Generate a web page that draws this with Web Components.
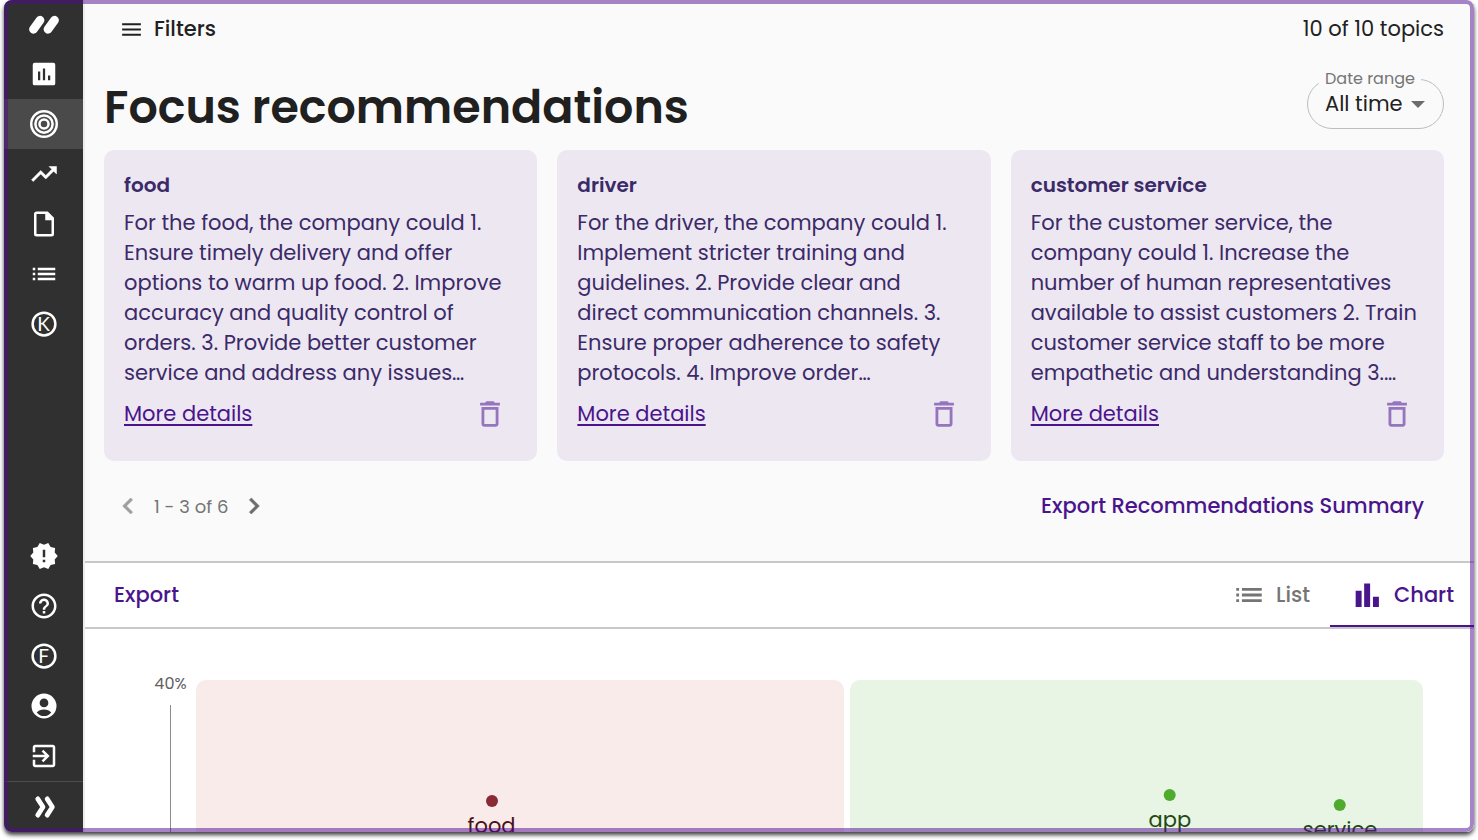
<!DOCTYPE html>
<html lang="en">
<head>
<meta charset="utf-8">
<meta name="viewport" content="width=device-width, initial-scale=1">
<title>Focus recommendations</title>
<style>
  body { margin: 0; background: #fff; font-family: Poppins, Inter, sans-serif; color: #212121; --brand: #4a148c; --muted: #757575; }
</style>
</head>
<body>
<focus-app></focus-app>
<script>
const ICONS = {
  logo: '<path d="M3.600 15.400L8.800 8.200M15.200 15.400L20.400 8.200" fill="none" stroke="currentColor" stroke-width="7" stroke-linecap="round"/>',
  report: '<path fill-rule="evenodd" d="M4.500 3h15A1.500 1.500 0 0 1 21 4.500v15a1.500 1.500 0 0 1-1.500 1.500h-15A1.500 1.500 0 0 1 3 19.500v-15A1.500 1.500 0 0 1 4.500 3zM7.200 10v7H9v-7zM11.100 7.500V17h1.800V7.500zM15.200 13.200V17H17v-3.800z"/>',
  target: '<g fill="none" stroke="currentColor" stroke-width="2"><circle cx="12" cy="12" r="10.200"/><circle cx="12" cy="12" r="6.900"/><circle cx="12" cy="12" r="3.600"/></g>',
  trend: '<path d="M16 6l2.290 2.290-4.880 4.880-4-4L2 16.590 3.410 18l6-6 4 4 6.300-6.290L22 12V6z" stroke="currentColor" stroke-width=".4"/>',
  file: '<path fill-rule="evenodd" d="M6 2h9l5 5v13a2 2 0 0 1-2 2H6a2 2 0 0 1-2-2V4c0-1.100.9-2 2-2zm0 2v16h12V9h-5V4z"/>',
  list: '<path d="M3 7h2v2H3zm4 0h14v2H7zM3 11h2v2H3zm4 0h14v2H7zM3 15h2v2H3zm4 0h14v2H7z"/>',
  ring: '<circle cx="12" cy="12" r="9.100" fill="none" stroke="currentColor" stroke-width="2"/>',
  alert: '<path fill-rule="evenodd" d="M23 12l-2.440-2.780.34-3.680-3.610-.82-1.890-3.180L12 3 8.600 1.540 6.710 4.720l-3.610.81.34 3.680L1 12l2.440 2.780-.34 3.690 3.610.82 1.890 3.180L12 21l3.400 1.460 1.890-3.180 3.610-.82-.34-3.680zM11 15h2v2h-2zm0-8h2v6h-2z"/>',
  help: '<path d="M11 18h2v-2h-2v2zm1-16C6.480 2 2 6.480 2 12s4.480 10 10 10 10-4.480 10-10S17.520 2 12 2zm0 18c-4.410 0-8-3.590-8-8s3.590-8 8-8 8 3.590 8 8-3.590 8-8 8zm0-14c-2.210 0-4 1.790-4 4h2c0-1.100.9-2 2-2s2 .9 2 2c0 2-3 1.750-3 5h2c0-2.250 3-2.500 3-5 0-2.210-1.790-4-4-4z"/>',
  user: '<path fill-rule="evenodd" d="M12 2a10 10 0 1 0 0 20 10 10 0 0 0 0-20zm0 4a3.500 3.500 0 1 1 0 7 3.500 3.500 0 0 1 0-7zM6.200 17.100C7.500 15.600 9.500 14.800 12 14.800s4.500.8 5.800 2.300C16.300 18.900 14.300 20 12 20s-4.300-1.100-5.800-2.900z"/>',
  exit: '<path d="M10.090 15.590L11.500 17l5-5-5-5-1.410 1.410L12.670 11H3v2h9.670l-2.580 2.590zM19 3H5c-1.110 0-2 .9-2 2v4h2V5h14v14H5v-4H3v4c0 1.100.89 2 2 2h14c1.100 0 2-.9 2-2V5c0-1.100-.9-2-2-2z"/>',
  expand: '<path d="M7 5.500l4.200 6.500L7 18.500M14.500 5.500l4.200 6.500-4.200 6.500" fill="none" stroke="currentColor" stroke-width="3.800" stroke-linecap="round" stroke-linejoin="round"/>',
  menu: '<path d="M3 6h18v1.900H3zm0 5.050h18v1.900H3zM3 16.100h18V18H3z"/>',
  trash: '<path fill-rule="evenodd" d="M6 19c0 1.100.9 2 2 2h8c1.100 0 2-.9 2-2V7H6v12zM8 9h8v10H8V9zm7.500-5l-1-1h-5l-1 1H5v2h14V4z"/>',
  prev: '<path d="M15.410 7.410L14 6l-6 6 6 6 1.410-1.410L10.830 12z" stroke="currentColor" stroke-width=".5"/>',
  next: '<path d="M10 6L8.590 7.410 13.170 12l-4.580 4.590L10 18l6-6z" stroke="currentColor" stroke-width=".5"/>',
  caret: '<path d="M5 9h14l-7 7z"/>',
  bars: '<path d="M4 9h4.200v11.500H4zM10 3.800h4.200v16.700H10zM16.200 13.200h4.200v7.300h-4.200z"/>'
};

class UiIcon extends HTMLElement {
  constructor() { super(); this.attachShadow({ mode: 'open' }); }
  connectedCallback() {
    this.shadowRoot.innerHTML = `<style>
      :host { display: inline-grid; place-items: center; width: var(--size, 30px); height: var(--size, 30px); flex: none; }
      svg, slot { grid-area: 1 / 1; }
      svg { width: 100%; height: 100%; fill: currentColor; display: block; }
    </style><svg viewBox="0 0 24 24" aria-hidden="true">${ICONS[this.getAttribute('name')]}</svg><slot></slot>`;
  }
}

class NavItem extends HTMLElement {
  constructor() { super(); this.attachShadow({ mode: 'open' }); }
  connectedCallback() {
    const letter = this.getAttribute('letter');
    this.shadowRoot.innerHTML = `<style>
      :host { display: block; height: 50px; }
      :host([active]) { background: #4a4a4a; }
      a { display: flex; height: 100%; align-items: center; justify-content: center; color: #fff; text-decoration: none; }
      span { font: 19px/20px Lato, sans-serif; grid-area: 1 / 1; }
    </style><a href="#" aria-label="${this.getAttribute('label')}"><ui-icon name="${this.getAttribute('icon')}">${letter ? `<span>${letter}</span>` : ''}</ui-icon></a>`;
  }
}

class SideNav extends HTMLElement {
  constructor() {
    super();
    this.attachShadow({ mode: 'open' }).innerHTML = `<style>
      :host { display: block; background: #303030; border-right: 2px solid #ececec; }
      nav { display: flex; flex-direction: column; height: 100%; }
      .logo { height: 49px; }
      .space { flex: 1; }
      .toggle { border-top: 1px solid #4c4c4c; }
    </style>
    <nav aria-label="Main">
      <nav-item class="logo" icon="logo" label="Home"></nav-item>
      <nav-item icon="report" label="Reports"></nav-item>
      <nav-item icon="target" label="Focus" active></nav-item>
      <nav-item icon="trend" label="Trends"></nav-item>
      <nav-item icon="file" label="Documents"></nav-item>
      <nav-item icon="list" label="Lists"></nav-item>
      <nav-item icon="ring" letter="K" label="Workspace"></nav-item>
      <div class="space"></div>
      <nav-item icon="alert" label="What's new"></nav-item>
      <nav-item icon="help" label="Help"></nav-item>
      <nav-item icon="ring" letter="F" label="Feedback"></nav-item>
      <nav-item icon="user" label="Account"></nav-item>
      <nav-item icon="exit" label="Log out"></nav-item>
      <nav-item class="toggle" icon="expand" label="Expand menu"></nav-item>
    </nav>`;
  }
}

class DateRange extends HTMLElement {
  constructor() {
    super();
    this.attachShadow({ mode: 'open' }).innerHTML = `<style>
      :host { display: block; }
      fieldset { box-sizing: border-box; width: 137px; height: 58px; margin: 0; padding: 0 0 0 11px; border: 1px solid #bdbdbd; border-radius: 25px; min-width: 0; }
      legend { padding: 0 6px; font-size: 16px; line-height: 16px; color: var(--muted); white-space: nowrap; }
      .field { display: flex; align-items: center; height: 34px; padding-left: 6px; }
      select { appearance: none; border: 0; padding: 0; margin: 0; background: none; font: 21px/30px Poppins, Inter, sans-serif; color: #212121; width: 81px; }
      ui-icon { --size: 24px; color: #6c6c6c; pointer-events: none; }
    </style>
    <fieldset><legend><label for="range">Date range</label></legend>
      <div class="field"><select id="range"><option>All time</option></select><ui-icon name="caret"></ui-icon></div>
    </fieldset>`;
  }
}

class RecommendationCard extends HTMLElement {
  constructor() {
    super();
    this.attachShadow({ mode: 'open' }).innerHTML = `<style>
      :host { display: block; padding: 20px 20px 32px; border-radius: 10px; background: #ede7f2; color: #3b2a68; font-size: 21px; line-height: 30px; min-width: 0; }
      h2 { margin: 0 0 8px; font-size: 20px; font-weight: 600; }
      p { margin: 0 0 11px; white-space: pre; }
      footer { display: flex; height: 30px; align-items: center; justify-content: space-between; }
      a { color: var(--brand); text-underline-offset: 3px; text-decoration-thickness: 2px; }
      button { display: flex; border: 0; padding: 0; margin: 0 10px 0 0; background: none; color: #9575bd; --size: 34px; }
    </style>
    <h2><slot name="title"></slot></h2><p><slot></slot></p>
    <footer><a href="#">More details</a><button aria-label="Delete"><ui-icon name="trash"></ui-icon></button></footer>`;
  }
}

class ViewTab extends HTMLElement {
  constructor() {
    super();
    this.attachShadow({ mode: 'open' }).innerHTML = `<style>
      :host { display: block; color: var(--muted); }
      :host([selected]) { color: var(--brand); }
      button { box-sizing: border-box; height: 64px; display: flex; align-items: center; gap: 10px; border: 0; border-bottom: 2px solid transparent; padding: 2px 20px 0; background: none; color: inherit; font: 500 21px/30px Poppins, Inter, sans-serif; }
      :host([selected]) button { border-color: currentColor; }
    </style><button><slot name="icon"></slot><slot></slot></button>`;
  }
}

class TopicPoint extends HTMLElement {
  constructor() {
    super();
    this.attachShadow({ mode: 'open' }).innerHTML = `<style>
      :host { position: absolute; display: flex; flex-direction: column; align-items: center; transform: translate(-50%, -6px); font-size: 21px; line-height: 26px; }
      i { width: 12px; height: 12px; border-radius: 50%; background: var(--dot); margin-bottom: 6px; }
    </style><i></i><slot></slot>`;
  }
}

class TopicChart extends HTMLElement {
  constructor() {
    super();
    this.attachShadow({ mode: 'open' }).innerHTML = `<style>
      :host { display: grid; grid-template-columns: 72px 648fr 573fr; background: #fff; padding: 51px 51px 0 39px; }
      .axis { display: flex; flex-direction: column; align-items: center; margin: -6px 9px 0 30px; font-size: 16px; line-height: 20px; color: #616161; }
      .axis span { margin-bottom: 11px; }
      .axis i { flex: 1; border-left: 1px solid #8c8c8c; }
      .zone { position: relative; border-radius: 10px 10px 0 0; }
      .low { background: #f9ebea; color: #4a1218; --dot: #8a2a35; margin-right: 3px; }
      .high { background: #e8f4e4; color: #1f4a12; --dot: #4fab2e; margin-left: 3px; }
      .food { left: 45.6%; top: 121px; }
      .app { left: 55.8%; top: 115px; }
      .service { left: 85.5%; top: 125px; }
    </style>
    <div class="axis"><span>40%</span><i></i></div>
    <div class="zone low"><topic-point class="food">food</topic-point></div>
    <div class="zone high"><topic-point class="app">app</topic-point><topic-point class="service">service</topic-point></div>`;
  }
}

class FocusApp extends HTMLElement {
  constructor() {
    super();
    this.attachShadow({ mode: 'open' }).innerHTML = `<style>
      :host { display: grid; grid-template-columns: 81px minmax(0, 1fr); grid-template-rows: minmax(0, 1fr); position: relative; box-sizing: border-box; height: calc(100vh - 8px); margin: 0 4px 8px; border-radius: 8px; overflow: clip; overflow-clip-margin: 8px; box-shadow: 0 3px 4px rgba(0, 0, 0, .75); }
      side-nav { border-radius: 8px 0 0 8px; }
      .edge { position: absolute; inset: 0; border: 4px solid rgba(80, 8, 145, .5); border-radius: 8px; pointer-events: none; }
      main { display: flex; flex-direction: column; background: #fafafa; border-radius: 0 8px 8px 0; overflow: hidden; }
      button { border: 0; padding: 0; background: none; font: 500 21px/30px Poppins, Inter, sans-serif; color: var(--brand); }
      .top, .heading, .pager, .tabs { display: flex; align-items: center; justify-content: space-between; }
      .top { padding: 14px 30px 0 34px; font-size: 21px; line-height: 30px; }
      .filters { display: flex; align-items: center; gap: 10px; color: #212121; --size: 25px; }
      .heading { padding: 0 30px 0 19px; margin: 27px 0 21px; height: 58px; }
      h1 { margin: 14px 0 0; font-size: 46px; line-height: 58px; font-weight: 600; color: #202020; }
      .cards { display: grid; grid-template-columns: repeat(3, minmax(0, 1fr)); gap: 20px; padding: 0 30px 0 19px; }
      .pager { padding: 29px 50px 39px 27px; }
      .pages { display: flex; align-items: center; gap: 10px; font-size: 18px; color: var(--muted); --size: 32px; }
      .pages button { display: flex; color: #6c6c6c; }
      .pages button:disabled { color: #9e9e9e; }
      .tabs { border: solid #c8c8c8; border-width: 2px 0; background: #fff; padding-left: 29px; }
      .views { display: flex; }
      .views ui-icon { --size: 34px; }
      topic-chart { flex: 1; }
    </style>
    <side-nav></side-nav>
    <main>
      <div class="top"><button class="filters"><ui-icon name="menu"></ui-icon>Filters</button><span>10 of 10 topics</span></div>
      <div class="heading"><h1>Focus recommendations</h1><date-range></date-range></div>
      <section class="cards">
        <recommendation-card><span slot="title">food</span>For the food, the company could 1.
Ensure timely delivery and offer
options to warm up food. 2. Improve
accuracy and quality control of
orders. 3. Provide better customer
service and address any issues…</recommendation-card>
        <recommendation-card><span slot="title">driver</span>For the driver, the company could 1.
Implement stricter training and
guidelines. 2. Provide clear and
direct communication channels. 3.
Ensure proper adherence to safety
protocols. 4. Improve order…</recommendation-card>
        <recommendation-card><span slot="title">customer service</span>For the customer service, the
company could 1. Increase the
number of human representatives
available to assist customers 2. Train
customer service staff to be more
empathetic and understanding 3.…</recommendation-card>
      </section>
      <div class="pager">
        <div class="pages"><button disabled aria-label="Previous page"><ui-icon name="prev"></ui-icon></button><span>1 - 3 of 6</span><button aria-label="Next page"><ui-icon name="next"></ui-icon></button></div>
        <button>Export Recommendations Summary</button>
      </div>
      <div class="tabs"><button>Export</button>
        <div class="views"><view-tab><ui-icon slot="icon" name="list"></ui-icon>List</view-tab><view-tab selected><ui-icon slot="icon" name="bars"></ui-icon>Chart</view-tab></div>
      </div>
      <topic-chart></topic-chart>
    </main>
    <div class="edge"></div>`;
  }
}

customElements.define('ui-icon', UiIcon);
customElements.define('nav-item', NavItem);
customElements.define('side-nav', SideNav);
customElements.define('date-range', DateRange);
customElements.define('recommendation-card', RecommendationCard);
customElements.define('view-tab', ViewTab);
customElements.define('topic-point', TopicPoint);
customElements.define('topic-chart', TopicChart);
customElements.define('focus-app', FocusApp);
</script>
</body>
</html>
